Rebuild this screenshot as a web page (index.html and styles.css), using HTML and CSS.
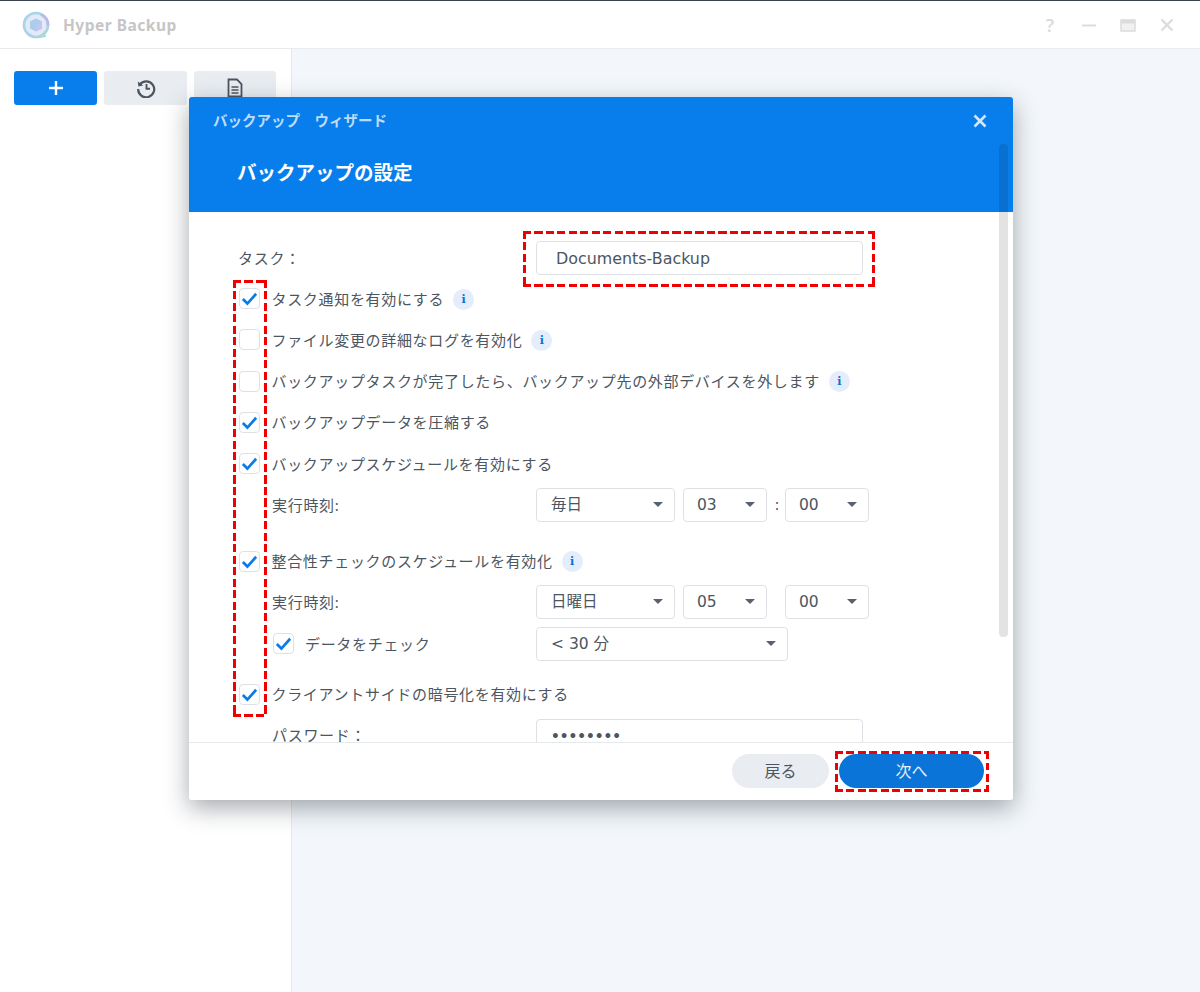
FILE: index.html
```html
<!DOCTYPE html>
<html lang="ja">
<head>
<meta charset="utf-8">
<title>Hyper Backup</title>
<link rel="stylesheet" href="styles.css">
</head>
<body>
<div class="app">
  <header class="titlebar">
    <svg class="logo" viewBox="0 0 30 30" width="30" height="30">
      <circle cx="15" cy="15" r="12" fill="#e4e9f8" stroke="#a9d3e6" stroke-width="2.600"/>
      <path d="M20 4.500a12 12 0 0 1 7 11" fill="none" stroke="#bcb9e8" stroke-width="2.800"/>
      <path d="M18 28l7-1-1.500-6z" fill="#a8dcd0"/>
      <path d="M15 8.500l6 3v7l-6 3-6-3v-7z" fill="#a9cdea"/>
      <path d="M15 15l6-3.500v7l-6 3z" fill="#c3c6ee"/>
    </svg>
    <span class="app-name">Hyper Backup</span>
    <div class="win-controls">
      <span class="win-help">?</span>
      <svg viewBox="0 0 16 16" width="16" height="16"><path d="M1 8.500h14" stroke="#dcdcdc" stroke-width="2"/></svg>
      <svg viewBox="0 0 16 16" width="16" height="16"><path d="M1 3h14v11H1z" fill="#f1f1f1" stroke="#dcdcdc" stroke-width="1.500"/><path d="M1 3h14v3.500H1z" fill="#dcdcdc"/></svg>
      <svg viewBox="0 0 16 16" width="16" height="16"><path d="M2.500 2.500l11 11M13.500 2.500l-11 11" stroke="#dcdcdc" stroke-width="2.400"/></svg>
    </div>
  </header>
  <div class="workspace">
    <aside class="sidebar">
      <div class="toolbar">
        <button class="tool tool-add"><svg viewBox="0 0 16 16" width="16" height="16"><path d="M8 1v14M1 8h14" stroke="#fff" stroke-width="2.400"/></svg></button>
        <button class="tool"><svg viewBox="0 0 20 20" width="20" height="20"><path d="M3.800 6.500A8 8 0 1 1 2.200 11" fill="none" stroke="#4b5560" stroke-width="2.200"/><path d="M1.800 3.500l.6 5 4.800-1z" fill="#4b5560"/><path d="M10.500 6v4.800h3.500" fill="none" stroke="#4b5560" stroke-width="1.900"/></svg></button>
        <button class="tool tool-last"><svg viewBox="0 0 16 20" width="16" height="20"><path d="M1.500 1.500h8.500l4.500 4.500v12.500h-13z" fill="none" stroke="#4b5560" stroke-width="1.800"/><path d="M4.500 9h7M4.500 12h7M4.500 15h7" stroke="#4b5560" stroke-width="1.300"/></svg></button>
      </div>
    </aside>
    <main class="main"></main>
  </div>
</div>

<section class="dialog">
  <div class="dlg-head">
    <div class="dlg-wizard">バックアップ　ウィザード</div>
    <h1 class="dlg-title">バックアップの設定</h1>
    <svg class="dlg-close" viewBox="0 0 14 14" width="14" height="14"><path d="M1.500 1.500l11 11M12.500 1.500l-11 11" stroke="#d5e8fb" stroke-width="2.600"/></svg>
  </div>
  <div class="dlg-body">
    <div class="row row-task">
      <span class="label-plain">タスク：</span>
      <div class="control"><div class="input">Documents-Backup</div></div>
    </div>
    <div class="row"><span class="check on"><svg viewBox="0 0 20 20"><path d="M3 10.500l4.800 4.800 9.200-10.300" fill="none" stroke="#0a7ce8" stroke-width="2.800"/></svg></span><span class="text">タスク通知を有効にする</span><span class="info">i</span></div>
    <div class="row"><span class="check"></span><span class="text">ファイル変更の詳細なログを有効化</span><span class="info">i</span></div>
    <div class="row"><span class="check"></span><span class="text">バックアップタスクが完了したら、バックアップ先の外部デバイスを外します</span><span class="info">i</span></div>
    <div class="row"><span class="check on"><svg viewBox="0 0 20 20"><path d="M3 10.500l4.800 4.800 9.200-10.300" fill="none" stroke="#0a7ce8" stroke-width="2.800"/></svg></span><span class="text">バックアップデータを圧縮する</span></div>
    <div class="row"><span class="check on"><svg viewBox="0 0 20 20"><path d="M3 10.500l4.800 4.800 9.200-10.300" fill="none" stroke="#0a7ce8" stroke-width="2.800"/></svg></span><span class="text">バックアップスケジュールを有効にする</span></div>
    <div class="row row-sub">
      <span class="sub-label">実行時刻:</span>
      <div class="control">
        <div class="select s-day">毎日</div>
        <div class="select s-time">03</div>
        <span class="colon">:</span>
        <div class="select s-time">00</div>
      </div>
    </div>
    <div class="row row-gap"><span class="check on"><svg viewBox="0 0 20 20"><path d="M3 10.500l4.800 4.800 9.200-10.300" fill="none" stroke="#0a7ce8" stroke-width="2.800"/></svg></span><span class="text">整合性チェックのスケジュールを有効化</span><span class="info">i</span></div>
    <div class="row row-sub">
      <span class="sub-label">実行時刻:</span>
      <div class="control">
        <div class="select s-day">日曜日</div>
        <div class="select s-time">05</div>
        <span class="colon"></span>
        <div class="select s-time">00</div>
      </div>
    </div>
    <div class="row row-sub">
      <span class="sub-check"><span class="check on"><svg viewBox="0 0 20 20"><path d="M3 10.500l4.800 4.800 9.200-10.300" fill="none" stroke="#0a7ce8" stroke-width="2.800"/></svg></span><span class="text">データをチェック</span></span>
      <div class="control"><div class="select s-wide">&lt; 30 分</div></div>
    </div>
    <div class="row row-gap2"><span class="check on"><svg viewBox="0 0 20 20"><path d="M3 10.500l4.800 4.800 9.200-10.300" fill="none" stroke="#0a7ce8" stroke-width="2.800"/></svg></span><span class="text">クライアントサイドの暗号化を有効にする</span></div>
    <div class="row row-sub">
      <span class="sub-label sub-pass">パスワード：</span>
      <div class="control"><div class="input input-pass">••••••••</div></div>
    </div>
  </div>
  <footer class="dlg-foot">
    <button class="btn btn-back">戻る</button>
    <button class="btn btn-next">次へ</button>
  </footer>
  <div class="scrollbar"></div>
</section>

<div class="mark mark-task"></div>
<div class="mark mark-checks"></div>
<div class="mark mark-next"></div>
</body>
</html>
```
FILE: styles.css
```css
* { box-sizing: border-box; }
html, body { margin: 0; height: 100%; }
body {
  position: relative;
  width: 1200px;
  height: 992px;
  overflow: hidden;
  background: #fff;
  font-family: "Noto Sans", "Noto Sans CJK JP", sans-serif;
  color: #4c5661;
}
.app { display: flex; flex-direction: column; height: 992px; border-top: 1px solid #39424e; }
.titlebar {
  display: flex;
  align-items: center;
  height: 48px;
  flex: none;
  padding: 0 25px 0 21px;
  border-bottom: 1px solid #e9ecef;
  background: #fff;
}
.logo { flex: none; }
.app-name {
  margin-left: 12px;
  font-size: 15.500px;
  font-weight: 700;
  letter-spacing: .5px;
  color: #c6c6c6;
}
.win-controls { margin-left: auto; display: flex; align-items: center; gap: 23px; }
.win-help { width: 16px; text-align: center; font-size: 18px; line-height: 20px; font-weight: 600; color: #dcdcdc; }
.workspace { flex: 1; display: flex; min-height: 0; }
.sidebar { width: 292px; flex: none; border-right: 1px solid #e6e9ec; padding: 22px 14px; background: #fff; }
.toolbar { display: flex; gap: 7px; }
.tool {
  width: 83px;
  height: 34px;
  padding: 0;
  border: 0;
  border-radius: 3px;
  background: #e9edf2;
  display: flex;
  align-items: center;
  justify-content: center;
}
.tool-last { width: 82px; }
.tool-add { background: #087eec; }
.main { flex: 1; background: #f3f7fb; }

.dialog {
  position: absolute;
  left: 189px;
  top: 97px;
  width: 824px;
  height: 703px;
  display: flex;
  flex-direction: column;
  background: #fff;
  border-radius: 3px;
  overflow: hidden;
  box-shadow: 0 8px 24px rgba(40, 50, 60, .42);
}
.dlg-head { position: relative; height: 115px; flex: none; background: #087eec; color: #fff; }
.dlg-wizard { position: absolute; left: 24px; top: 13px; font-size: 14.500px; line-height: 20px; font-weight: 700; color: #bcdcfa; }
.dlg-title { position: absolute; left: 48px; top: 63px; margin: 0; font-size: 19.500px; line-height: 26px; font-weight: 700; color: #fff; }
.dlg-close { position: absolute; left: 784px; top: 17px; }
.dlg-body { flex: 1; min-height: 0; overflow: hidden; padding: 25px 0 0 50px; font-size: 15px; }
.row { display: flex; align-items: center; height: 41.250px; }
.row-task { height: 41px; }
.row-gap { margin-top: 15px; }
.row-gap2 { margin-top: 10px; }
.row-gap2 .text { margin-bottom: 3px; }
.label-plain { width: 297px; margin-left: -1px; margin-right: 1px; flex: none; letter-spacing: .7px; }
.sub-label { width: 264px; margin-left: 33px; flex: none; letter-spacing: .7px; margin-bottom: 1px; }
.sub-pass { margin-bottom: 3px; }
.sub-check { display: flex; align-items: center; width: 263px; margin-left: 34px; flex: none; }
.sub-check .text { margin-left: 11px; }
.control { display: flex; align-items: center; gap: 8px; }
.check {
  display: block;
  flex: none;
  width: 21px;
  height: 21px;
  border: 1px solid #dde1e6;
  border-radius: 4px;
  background: #fff;
}
.check svg { display: block; width: 19px; height: 19px; }
.text { margin-left: 11.500px; margin-bottom: 1px; letter-spacing: .68px; white-space: nowrap; }
.info {
  flex: none;
  width: 21px;
  height: 21px;
  margin-top: 1px;
  margin-left: 9px;
  border-radius: 50%;
  background: #e3edfb;
  color: #0a6fd0;
  font: 700 11px/22px "DejaVu Serif", serif;
  text-align: center;
}
.input {
  width: 327px;
  height: 34px;
  padding: 0 19px;
  border: 1px solid #dde1e6;
  border-radius: 4px;
  font-family: "DejaVu Sans", "Noto Sans CJK JP", sans-serif;
  font-size: 15.900px;
  line-height: 33px;
  background: #fff;
  white-space: nowrap;
}
.input-pass { padding-left: 14px; font-size: 13.700px; font-weight: 700; line-height: 32px; }
.select {
  position: relative;
  height: 34px;
  padding-left: 14px;
  border: 1px solid #dde1e6;
  border-radius: 4px;
  font-family: "DejaVu Sans", "Noto Sans CJK JP", sans-serif;
  font-size: 15.500px;
  line-height: 33px;
  background: #fff;
}
.select::after {
  content: "";
  position: absolute;
  right: 11px;
  top: 13px;
  border: 5.500px solid transparent;
  border-top: 5.500px solid #59626c;
  border-bottom: 0;
}
.s-day { width: 139px; }
.s-time { width: 84px; padding-left: 13px; }
.s-wide { width: 252px; }
.colon { width: 2px; text-align: center; font-size: 15px; line-height: 1; }
.dlg-foot {
  display: flex;
  flex: none;
  height: 58px;
  align-items: flex-start;
  justify-content: flex-end;
  gap: 10px;
  padding: 11px 29px 0 0;
  border-top: 1px solid #e6e9ec;
  background: #fff;
}
.btn {
  height: 34px;
  padding: 0 0 2px;
  border: 0;
  border-radius: 17px;
  font-family: inherit;
  font-size: 16px;
}
.btn-back { width: 97px; background: #e9edf2; color: #4c5661; }
.btn-next { width: 145px; background: #0a74d8; color: #e6f1fc; }
.scrollbar {
  position: absolute;
  left: 810px;
  top: 47px;
  width: 9px;
  height: 493px;
  border-radius: 4px;
  background: rgba(0, 0, 0, .11);
}
.mark {
  position: absolute;
  background-image:
    repeating-linear-gradient(to right, #f00000 0 8px, transparent 8px 11.500px),
    repeating-linear-gradient(to right, #f00000 0 8px, transparent 8px 11.500px),
    repeating-linear-gradient(to bottom, #f00000 0 8px, transparent 8px 11.500px),
    repeating-linear-gradient(to bottom, #f00000 0 8px, transparent 8px 11.500px);
  background-size: 100% 3px, 100% 3px, 3px 100%, 3px 100%;
  background-position: left top, left bottom, left top, right top;
  background-repeat: no-repeat;
}
.mark-task { left: 523px; top: 231px; width: 352px; height: 56px; }
.mark-checks { left: 233px; top: 280px; width: 34px; height: 437px; }
.mark-next { left: 835px; top: 751px; width: 154px; height: 41px; }
```
